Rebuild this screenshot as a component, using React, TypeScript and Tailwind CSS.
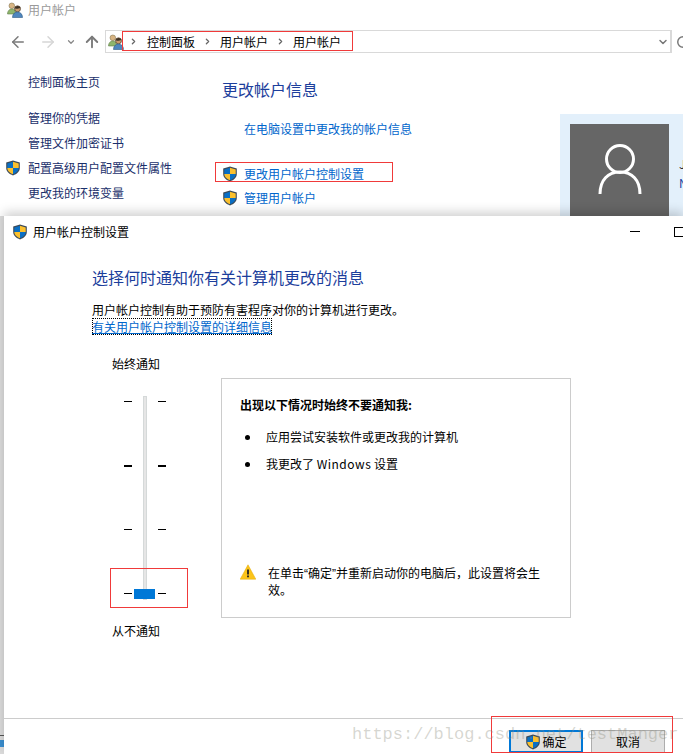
import { ArrowLeft, ArrowRight, ArrowUp, ChevronDown, ChevronRight, RotateCw } from "lucide-react";

function Shield({ className }: { className?: string }) {
  return (
    <svg viewBox="0 0 16 16" className={className}>
      <path d="M8 .6 14.8 2.6V8c0 3.6-3 6-6.8 7.4C4.200 14 1.200 11.600 1.200 8V2.600Z" fill="#3c4a58" />
      <path d="M8 1.800V8H2.300V3.400Z" fill="#0a6fc4" />
      <path d="M8 1.800 13.700 3.400V8H8Z" fill="#fbc02d" />
      <path d="M2.300 8H8V14.200C5 13 2.300 11 2.300 8Z" fill="#fbc02d" />
      <path d="M8 8H13.700C13.700 11 11 13 8 14.200Z" fill="#0a6fc4" />
    </svg>
  );
}

function UsersIcon({ className }: { className?: string }) {
  return (
    <svg viewBox="0 0 16 16" className={className}>
      <circle cx="4.800" cy="3.800" r="2.800" fill="#d8b483" stroke="#8a7a55" strokeWidth="0.600" />
      <path d="M.5 12c0-3 1.800-5 4.300-5s4 1.800 4 5Z" fill="#8fb56c" stroke="#5f7d4a" strokeWidth="0.600" />
      <circle cx="10.500" cy="6.800" r="3" fill="#c99a6b" stroke="#4a3a2a" strokeWidth="0.700" />
      <path d="M10.500 4a3 3 0 0 0-3 2.600c2 .4 4.500 0 6-.8A3 3 0 0 0 10.500 4Z" fill="#3d3226" />
      <path d="M5.500 15.500c0-3.200 2-5.500 5-5.500s5 2.300 5 5.500Z" fill="#4f86bd" stroke="#2f5a85" strokeWidth="0.600" />
    </svg>
  );
}

function WarningIcon() {
  return (
    <svg viewBox="0 0 16 16" className="h-4 w-4 shrink-0">
      <path d="M8 .8 15.800 15.200H.2Z" fill="#fcc419" stroke="#e0a800" strokeWidth="0.500" />
      <rect x="7.100" y="5.500" width="1.800" height="5" fill="#222" />
      <rect x="7.100" y="11.500" width="1.800" height="1.800" fill="#222" />
    </svg>
  );
}

function Tick({ thick }: { thick?: boolean }) {
  return (
    <div className="flex w-[42px] justify-between">
      <div className={`w-2 bg-black ${thick ? "h-[2px]" : "h-px"}`} />
      <div className={`w-2 bg-black ${thick ? "h-[2px]" : "h-px"}`} />
    </div>
  );
}

function NavLink({ label, shield }: { label: string; shield?: boolean }) {
  return (
    <div className="relative flex h-[18px] items-center pl-7 text-xs text-[#1a2f6b]">
      {shield && <Shield className="absolute left-[5px] top-px h-4 w-4" />}
      {label}
    </div>
  );
}

export default function App() {
  return (
    <div className='relative h-[754px] w-[683px] overflow-hidden bg-white font-["Noto_Sans_CJK_SC","Liberation_Sans",sans-serif] text-xs leading-none text-black'>
      {/* back window */}
      <div className="flex h-[216px] flex-col">
        <div className="flex h-[19px] items-center gap-[5px] pl-[7px] pt-[1px] text-[#9a9a9a]">
          <UsersIcon className="h-4 w-4" />
          用户帐户
        </div>
        <div className="mt-[11px] flex h-[23px] items-center pl-[9px]">
          <ArrowLeft className="h-[18px] w-[18px] shrink-0 text-[#7a7a7a]" strokeWidth={2} />
          <ArrowRight className="ml-[12px] h-[18px] w-[18px] shrink-0 text-[#d6d6d6]" strokeWidth={2} />
          <ChevronDown className="ml-[9px] h-[10px] w-[10px] shrink-0 text-[#888]" strokeWidth={3} />
          <ArrowUp className="ml-[7px] h-[18px] w-[18px] shrink-0 text-[#7a7a7a]" strokeWidth={2.500} />
          <div className="ml-[4px] flex h-[23px] w-[567px] shrink-0 items-center border border-[#d9d9d9] pl-[2px]">
            <UsersIcon className="h-4 w-4" />
            <ChevronRight className="ml-[5px] h-[9px] w-[9px] text-[#666]" strokeWidth={3.500} />
            <span className="ml-[9px]">控制面板</span>
            <ChevronRight className="ml-[8px] h-[9px] w-[9px] text-[#666]" strokeWidth={3.500} />
            <span className="ml-[8px]">用户帐户</span>
            <ChevronRight className="ml-[8px] h-[9px] w-[9px] text-[#666]" strokeWidth={3.500} />
            <span className="ml-[8px]">用户帐户</span>
            <ChevronDown className="ml-auto mr-[1px] h-3 w-3 text-[#777]" strokeWidth={3} />
            <div className="h-full w-px bg-[#d9d9d9]" />
          </div>
          <RotateCw className="ml-[4px] h-[14px] w-[14px] shrink-0 text-[#777]" strokeWidth={2.500} />
        </div>
        <div className="flex">
          <div className="w-[222px] shrink-0 pt-[20px]">
            <NavLink label="控制面板主页" />
            <div className="mt-[18px] flex flex-col gap-[7px]">
              <NavLink label="管理你的凭据" />
              <NavLink label="管理文件加密证书" />
              <NavLink label="配置高级用户配置文件属性" shield />
              <NavLink label="更改我的环境变量" />
            </div>
          </div>
          <div className="w-[338px] shrink-0 pt-[26px]">
            <div className="text-base leading-[20px] text-[#1c3e9c]">更改帐户信息</div>
            <div className="mt-[24px] pl-[22px] text-[#0066cc]">在电脑设置中更改我的帐户信息</div>
            <div className="mt-[31px] flex items-center gap-[6px] text-[#0066cc]">
              <Shield className="h-4 w-4" />
              更改用户帐户控制设置
            </div>
            <div className="mt-[8px] flex items-center gap-[6px] text-[#0066cc]">
              <Shield className="h-4 w-4" />
              管理用户帐户
            </div>
          </div>
          <div className="mt-[61px] flex h-[102px] flex-1 gap-[10px] overflow-hidden bg-[#e3f0fb] pl-[10px] pt-[10px]">
            <div className="flex h-[110px] w-[99px] shrink-0 items-start justify-center bg-[#666] pt-[20px]">
              <svg viewBox="0 0 44 50" className="h-[50px] w-[44px]" fill="none" stroke="#fff" strokeWidth="3">
                <circle cx="22" cy="15" r="13.500" />
                <path d="M2 50C2 36 10 28 22 28s20 8 20 22" />
              </svg>
            </div>
            <div className="pt-[30px] text-xs leading-[19px] text-[#1c3e9c]">
              <div className="text-[#222]">J</div>
              <div>N</div>
            </div>
          </div>
        </div>
      </div>

      {/* annotation boxes */}
      <div className="absolute left-[122px] top-[31px] z-20 h-[20px] w-[231px] border border-[#f03a3a]" />
      <div className="absolute left-[215px] top-[162px] z-20 h-[20px] w-[178px] border border-[#f03a3a]" />
      <div className="absolute left-[110px] top-[568px] z-20 h-[40px] w-[78px] border border-[#f03a3a]" />
      <div className="absolute left-[491px] top-[716px] z-20 h-[37px] w-[182px] border border-[#f03a3a]" />

      {/* left edge of the window under the dialog */}
      <div className="absolute bottom-0 left-0 top-[216px] w-[4px] bg-[#dcdcdc]">
        <div className="absolute left-0 top-[519px] h-px w-full bg-[#555]" />
        <div className="absolute left-0 top-[524px] h-[7px] w-full bg-[#3b8fd0]" />
      </div>

      {/* dialog */}
      <div className="absolute bottom-0 left-[4px] right-0 top-[216px] z-10 flex flex-col bg-white shadow-[0_-4px_10px_rgba(0,0,0,0.18)]">
        <div className="flex h-[30px] items-center gap-[5px] pl-[8px] pt-[1px]">
          <Shield className="h-4 w-4" />
          用户帐户控制设置
          <div className="-mr-px ml-auto flex items-center gap-[34px]">
            <div className="h-px w-[10px] bg-black" />
            <div className="h-[10px] w-[10px] border border-black" />
          </div>
        </div>
        <div className="flex-1 pl-[88px]">
          <div className="mt-[21px] text-base leading-[20px] text-[#1c3e9c]">选择何时通知你有关计算机更改的消息</div>
          <div className="mt-[15px] leading-[15px]">用户帐户控制有助于预防有害程序对你的计算机进行更改。</div>
          <div className="mt-px flex h-[17px] w-fit items-center whitespace-nowrap outline-1 -outline-offset-1 outline-dotted outline-black text-[#0066cc] underline">
            有关用户帐户控制设置的详细信息
          </div>
          <div className="mt-[23px] flex">
            <div className="w-[129px] shrink-0 pl-[20px]">
              <div>始终通知</div>
              <div className="relative ml-[12px] mt-[26px] flex h-[204px] w-[42px] flex-col justify-between pb-[6px] pt-[5px]">
                <div className="absolute bottom-0 left-[19px] top-0 w-1 border border-[#d5d9d9] bg-[#e6e6e6]" />
                <Tick />
                <Tick thick />
                <Tick />
                <Tick />
                <div className="absolute bottom-[1px] left-[10px] h-[10px] w-[21px] bg-[#0078d7]" />
              </div>
              <div className="mt-[25px]">从不通知</div>
            </div>
            <div className="mt-[20px] flex h-[240px] w-[350px] shrink-0 flex-col border border-[#cccccc] pl-[18px] pr-[24px]">
              <div className="mt-[20px] font-bold">出现以下情况时始终不要通知我:</div>
              <div className="mt-[20px] flex items-center gap-4">
                <div className="ml-[5px] h-[5px] w-[5px] rounded-full bg-black" />
                应用尝试安装软件或更改我的计算机
              </div>
              <div className="mt-[15px] flex items-center gap-4">
                <div className="ml-[5px] h-[5px] w-[5px] rounded-full bg-black" />
                <div>
                  我更改了 <span className="tracking-[0.5px]">Windows</span> 设置
                </div>
              </div>
              <div className="mb-[19px] mt-auto flex items-start gap-[12px] leading-[16px]">
                <WarningIcon />
                <div className="mt-px">
                  在单击<span className='font-["Liberation_Sans",sans-serif]'>“</span>确定<span className='font-["Liberation_Sans",sans-serif]'>”</span>并重新启动你的电脑后，此设置将会生效。
                </div>
              </div>
            </div>
          </div>
        </div>
        <div className="flex h-[36px] shrink-0 items-start justify-end gap-2 border-t border-[#cccccc] pr-[18px] pt-[11px]">
          <div className="flex h-[23px] w-[74px] items-center justify-center gap-[1px] border-2 border-[#0078d7] bg-[#e1e1e1]">
            <Shield className="h-4 w-4" />
            确定
          </div>
          <div className="flex h-[23px] w-[74px] items-center justify-center border border-[#adadad] bg-[#e1e1e1]">
            取消
          </div>
        </div>
      </div>

      {/* watermark */}
      <div className='absolute left-[352px] top-[725px] z-30 font-["Liberation_Mono",monospace] text-[17px] leading-[20px] text-[#8a8a7a]/35'>
        https://blog.csdn.net/testManger
      </div>
    </div>
  );
}
